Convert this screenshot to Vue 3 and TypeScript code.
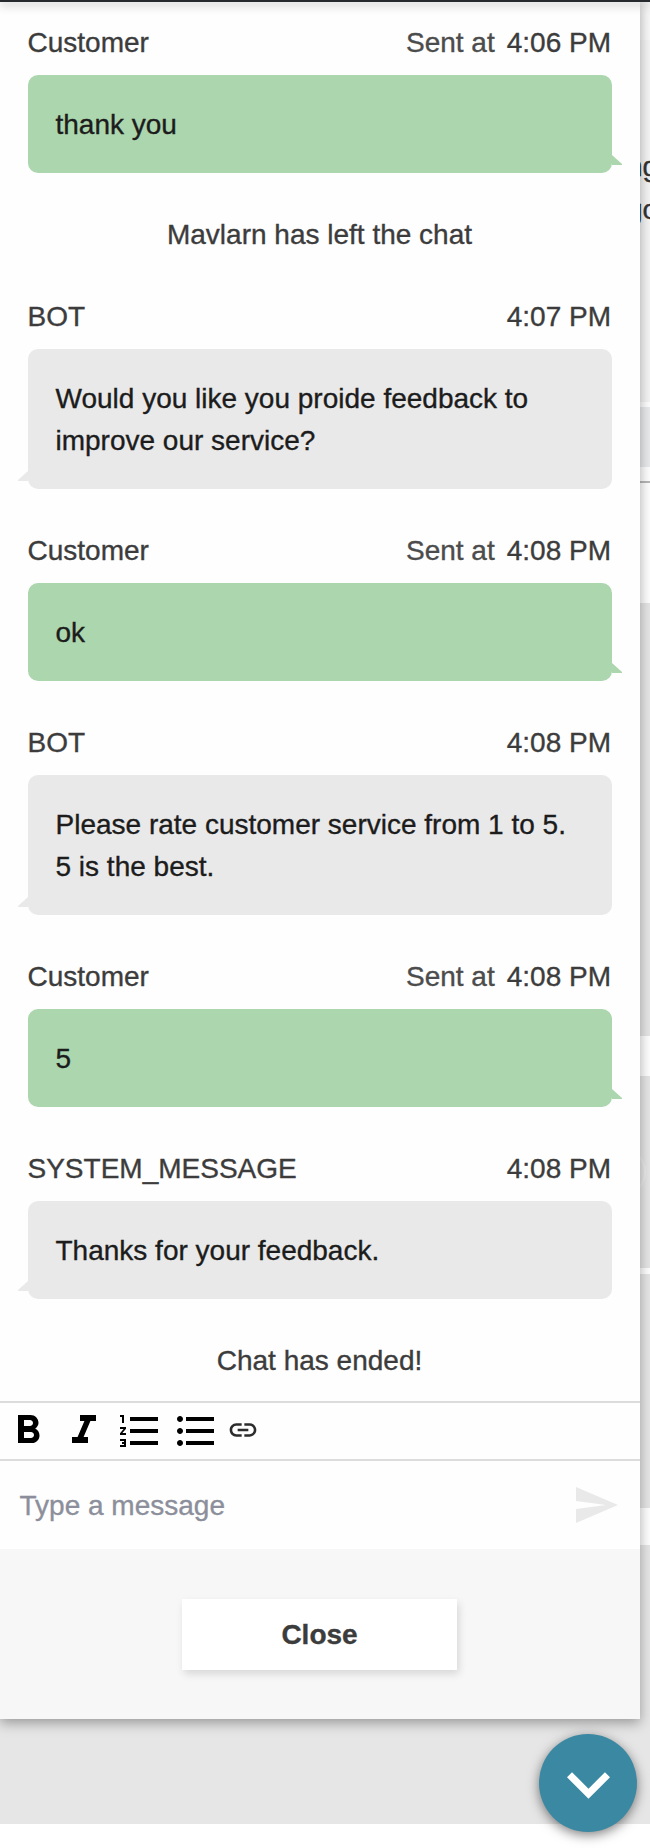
<script setup lang="ts">
interface Message {
  kind: 'message'
  sender: string
  time: string
  own: boolean
  lines: string[]
}

interface Notice {
  kind: 'notice'
  text: string
}

const feed: (Message | Notice)[] = [
  { kind: 'message', sender: 'Customer', time: '4:06 PM', own: true, lines: ['thank you'] },
  { kind: 'notice', text: 'Mavlarn has left the chat' },
  {
    kind: 'message',
    sender: 'BOT',
    time: '4:07 PM',
    own: false,
    lines: ['Would you like you proide feedback to', 'improve our service?'],
  },
  { kind: 'message', sender: 'Customer', time: '4:08 PM', own: true, lines: ['ok'] },
  {
    kind: 'message',
    sender: 'BOT',
    time: '4:08 PM',
    own: false,
    lines: ['Please rate customer service from 1 to 5.', '5 is the best.'],
  },
  { kind: 'message', sender: 'Customer', time: '4:08 PM', own: true, lines: ['5'] },
  {
    kind: 'message',
    sender: 'SYSTEM_MESSAGE',
    time: '4:08 PM',
    own: false,
    lines: ['Thanks for your feedback.'],
  },
  { kind: 'notice', text: 'Chat has ended!' },
]

const tools: { name: string; path: string }[] = [
  {
    name: 'Bold',
    path: 'M15.6 10.79c.97-.67 1.65-1.77 1.65-2.79 0-2.26-1.75-4-4-4H7v14h7.04c2.09 0 3.71-1.7 3.71-3.79 0-1.52-.86-2.82-2.15-3.42zM10 6.5h3c.83 0 1.5.67 1.5 1.5s-.67 1.5-1.5 1.5h-3v-3zm3.5 9H10v-3h3.5c.83 0 1.5.67 1.5 1.5s-.67 1.5-1.5 1.5z',
  },
  { name: 'Italic', path: 'M10 4v3h2.21l-3.42 8H6v3h8v-3h-2.21l3.42-8H18V4z' },
  {
    name: 'Numbered list',
    path: 'M2 17h2v.5H3v1h1v.5H2v1h3v-4H2v1zm1-9h1V4H2v1h1v3zm-1 3h1.8L2 13.1v.9h3v-1H3.2L5 10.9V10H2v1zm5-6v2h14V5H7zm0 14h14v-2H7v2zm0-6h14v-2H7v2z',
  },
  {
    name: 'Bulleted list',
    path: 'M4 10.5c-.83 0-1.5.67-1.5 1.5s.67 1.5 1.5 1.5 1.5-.67 1.5-1.5-.67-1.5-1.5-1.5zm0-6c-.83 0-1.5.67-1.5 1.5S3.17 7.5 4 7.5 5.5 6.83 5.5 6 4.83 4.5 4 4.5zm0 12c-.83 0-1.5.68-1.5 1.5s.68 1.5 1.5 1.5 1.5-.68 1.5-1.5-.67-1.5-1.5-1.5zM7 19h14v-2H7v2zm0-6h14v-2H7v2zm0-8v2h14V5H7z',
  },
]
</script>

<template>
  <div class="screen">
    <div class="page">
      <div class="page-head"></div>
      <div class="page-copy">
        <p>ng</p>
        <p>go</p>
      </div>
      <div class="page-gap thin"></div>
      <div class="page-row"></div>
      <div class="page-gap ruled"></div>
      <div class="page-gap tall"></div>
      <div class="block first"></div>
      <div class="page-gap mid"></div>
      <div class="block second"><span class="knob"></span></div>
      <div class="page-gap slim"></div>
      <div class="block third"></div>
      <div class="page-gap low"></div>
      <div class="block last"></div>
    </div>

    <main class="chat">
      <section class="feed">
        <template v-for="(item, i) in feed" :key="i">
          <article v-if="item.kind === 'message'" class="message" :class="{ own: item.own }">
            <header class="meta">
              <span class="sender">{{ item.sender }}</span>
              <span v-if="item.own" class="sent">Sent at</span>
              <time>{{ item.time }}</time>
            </header>
            <div class="bubble">
              <div v-for="line in item.lines" :key="line">{{ line }}</div>
              <svg class="tail" viewBox="0 0 10 10" aria-hidden="true"><path d="M0 0L10 9V10H0z" /></svg>
            </div>
          </article>
          <p v-else class="notice">{{ item.text }}</p>
        </template>
      </section>

      <div class="toolbar">
        <button v-for="tool in tools" :key="tool.name" class="tool" type="button" :aria-label="tool.name">
          <svg viewBox="0 0 24 24"><path :d="tool.path" /></svg>
        </button>
        <button class="tool link" type="button" aria-label="Link">
          <svg viewBox="0 0 24 24">
            <path d="M3.9 12c0-1.71 1.39-3.1 3.1-3.1h4V7H7c-2.76 0-5 2.24-5 5s2.24 5 5 5h4v-1.9H7c-1.71 0-3.1-1.39-3.1-3.1zM8 13h8v-2H8v2zm9-6h-4v1.9h4c1.71 0 3.1 1.39 3.1 3.1s-1.39 3.1-3.1 3.1h-4V17h4c2.76 0 5-2.24 5-5s-2.24-5-5-5z" />
          </svg>
        </button>
      </div>

      <div class="composer">
        <span class="placeholder">Type a message</span>
        <svg class="send" viewBox="0 0 24 24"><path d="M2 21L23 12 2 3v7l15 2-15 2z" /></svg>
      </div>

      <footer class="actions">
        <button class="close" type="button">Close</button>
      </footer>
    </main>

    <div class="topbar"></div>
    <button class="fab" type="button" aria-label="Minimise chat">
      <svg viewBox="6 8.59 12 7.41"><path d="M7.41 8.59L12 13.17l4.59-4.58L18 10l-6 6-6-6z" /></svg>
    </button>
  </div>
</template>

<style>
body {
  margin: 0;
  background: #fff;
}
</style>

<style scoped>
.screen {
  position: relative;
  display: grid;
  grid-template-columns: 640px 10px;
  grid-template-rows: 1719px 129px;
  width: 650px;
  height: 1848px;
  overflow: hidden;
  font-family: 'Liberation Sans', Arial, sans-serif;
  font-size: 28px;
  line-height: 42px;
  color: #3c3c3c;
  -webkit-text-stroke: 0.35px currentColor;
}

p {
  margin: 0;
}

button {
  border: 0;
  padding: 0;
  font: inherit;
}

svg {
  display: block;
}

/* Page behind the chat window */
.page {
  grid-area: 1 / 1 / 3 / 3;
  display: flex;
  flex-direction: column;
  overflow: hidden;
}

.page-head {
  height: 40px;
  background: #f9f9f9;
}

.page-copy {
  box-sizing: border-box;
  height: 362px;
  padding: 106px 0 0 627px;
  background: #f5f5f5;
  color: #333;
}

.page-copy p {
  height: 43px;
}

.page-gap {
  background: #fff;
}

.thin {
  height: 5px;
}

.page-row {
  height: 60px;
  background: #eaebed;
}

.ruled {
  height: 14px;
  border-bottom: 2px solid #b8b8b8;
}

.tall {
  height: 120px;
}

.mid {
  height: 40px;
}

.slim {
  height: 6px;
}

.low {
  height: 37px;
}

.block {
  background: #e6e6e6;
}

.first {
  height: 433px;
}

.second {
  display: flex;
  align-items: center;
  height: 192px;
}

.knob {
  box-sizing: border-box;
  width: 50px;
  height: 50px;
  margin-left: 596px;
  border: 2px solid #ececec;
  border-radius: 50%;
}

.third {
  height: 234px;
}

.last {
  height: 279px;
}

/* Chat window */
.chat {
  position: relative;
  grid-area: 1 / 1;
  display: flex;
  flex-direction: column;
  background: #fefefe;
  box-shadow: 0 4px 12px rgba(0, 0, 0, 0.34);
}

.feed {
  box-sizing: border-box;
  height: 1401px;
  padding: 22px 28px 0;
}

.message {
  margin-bottom: 41px;
}

.meta {
  display: flex;
  gap: 12px;
  height: 53px;
  margin: 0 1px 0 -0.5px;
}

.sender {
  margin-right: auto;
}

.sent {
  color: #4c4c4c;
}

.bubble {
  position: relative;
  padding: 29px 28px 27px 27.5px;
  border-radius: 10px;
  background: #e9e9e9;
  color: #1c1c1c;
}

.own .bubble {
  background: #acd6ad;
}

.tail {
  position: absolute;
  bottom: 8px;
  left: -10px;
  width: 10px;
  height: 10px;
  fill: #e9e9e9;
  transform: scaleX(-1);
}

.own .tail {
  right: -10px;
  left: auto;
  fill: #acd6ad;
  transform: none;
}

.notice {
  margin: 0 1px 40px 0;
  text-align: center;
}

.toolbar {
  box-sizing: border-box;
  display: flex;
  gap: 8px;
  height: 60px;
  padding: 4px 4px 0;
  border-top: 2px solid #dcdcdc;
  border-bottom: 2px solid #dcdcdc;
}

.tool {
  width: 48px;
  height: 48px;
  background: none;
  fill: #000;
}

.link {
  width: 32px;
  height: 32px;
  margin: 7px 0 0 -1px;
  fill: #2c2c2c;
}

.composer {
  display: flex;
  align-items: center;
  justify-content: space-between;
  height: 88px;
  padding: 0 20px 0 19.5px;
}

.placeholder {
  padding-top: 2px;
  color: #8c8f9b;
}

.send {
  width: 48px;
  height: 48px;
  fill: #e9e9e9;
}

.actions {
  flex: 1;
  display: flex;
  justify-content: center;
  align-items: flex-start;
  padding: 50px 1px 0 0;
  background: #f7f7f7;
}

.close {
  width: 275px;
  height: 71px;
  background: #fff;
  box-shadow: 2px 4px 8px rgba(0, 0, 0, 0.13);
  color: #3c3c3c;
  font-weight: 700;
}

/* Floating layers */
.topbar {
  position: absolute;
  top: 0;
  left: 0;
  right: 0;
  height: 2px;
  background: #262a2e;
  box-shadow: 0 2px 10px rgba(0, 0, 0, 0.5);
}

.fab {
  position: absolute;
  right: 13px;
  bottom: 16px;
  display: grid;
  place-items: center;
  width: 98px;
  height: 98px;
  padding-top: 5px;
  border-radius: 50%;
  background: #3b88a3;
  box-shadow: 0 3px 12px rgba(0, 0, 0, 0.5);
  fill: #fff;
}

.fab svg {
  width: 43px;
  height: 27px;
}
</style>
